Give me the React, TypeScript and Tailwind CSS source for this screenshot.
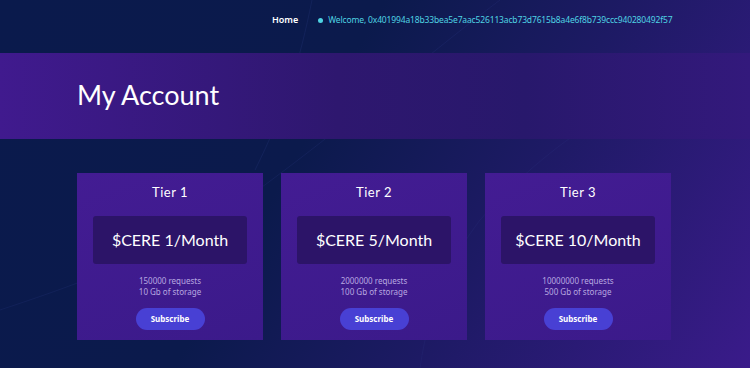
import React from "react";

const tiers = [
  { name: "Tier 1", price: "$CERE 1/Month", req: "150000 requests", storage: "10 Gb of storage" },
  { name: "Tier 2", price: "$CERE 5/Month", req: "2000000 requests", storage: "100 Gb of storage" },
  { name: "Tier 3", price: "$CERE 10/Month", req: "10000000 requests", storage: "500 Gb of storage" },
];

export default function App() {
  return (
    <div className="relative w-full h-[368px] overflow-hidden bg-[linear-gradient(120deg,#0a1a4c_0%,#0b1a4c_40%,#1d1a64_65%,#3a1b8a_100%)] font-['Noto_Sans',sans-serif]">
      <svg className="absolute inset-0 pointer-events-none" width="750" height="368" viewBox="0 0 750 368">
        <path d="M312 0 C 300 60, 285 110, 255 170" stroke="#3a4a9a" strokeOpacity="0.25" fill="none" strokeWidth="0.7" />
        <path d="M500 0 C 420 60, 330 140, 230 210 C 150 260, 60 290, 0 310" stroke="#3a4a9a" strokeOpacity="0.22" fill="none" strokeWidth="0.7" />
        <path d="M750 60 C 650 80, 560 130, 480 220 C 450 260, 430 300, 420 368" stroke="#3a4a9a" strokeOpacity="0.18" fill="none" strokeWidth="0.7" />
      </svg>
      <nav className="relative h-[53px] flex items-start pt-[13px] pl-[272px]">
        <span className="text-white font-semibold text-[9px] leading-[14px]">Home</span>
        <span className="ml-[20px] flex items-center text-[#4fd3e3] text-[8.5px] tracking-[-0.15px] leading-[14px]">
          <span className="w-[5px] h-[5px] rounded-full bg-[#4fd3e3] mr-[5px]" />
          Welcome, 0x401994a18b33bea5e7aac526113acb73d7615b8a4e6f8b739ccc940280492f57
        </span>
      </nav>
      <header className="relative h-[86px] flex items-center pl-[77px] bg-[linear-gradient(90deg,#401a8e_0%,#2e176f_45%,#28186c_70%,#33197c_100%)]">
        <h1 className="text-white text-[27px] font-['Lato',sans-serif] -mt-[2px]">My Account</h1>
      </header>
      <section className="relative flex gap-[18px] pl-[77px] pt-[34px]">
        {tiers.map((t) => (
          <div key={t.name} className="w-[186px] h-[167px] bg-[linear-gradient(160deg,#431c93_0%,#3b1a8a_100%)] flex flex-col items-center pt-[11px]">
            <div className="text-white text-[13px] leading-[16px] font-['Lato',sans-serif] tracking-[0.5px]">{t.name}</div>
            <div className="mt-[16px] w-[154px] h-[48px] rounded-[3px] bg-[#2c1468] flex items-center justify-center text-white text-[16px] font-['Lato',sans-serif]">
              {t.price}
            </div>
            <div className="mt-[11px] text-[8px] leading-[11px] text-[#b8a8e0] text-center">
              <div>{t.req}</div>
              <div>{t.storage}</div>
            </div>
            <button className="mt-[11px] w-[69px] h-[22px] rounded-full bg-[#4840d4] text-white text-[8px] font-bold">Subscribe</button>
          </div>
        ))}
      </section>
    </div>
  );
}
